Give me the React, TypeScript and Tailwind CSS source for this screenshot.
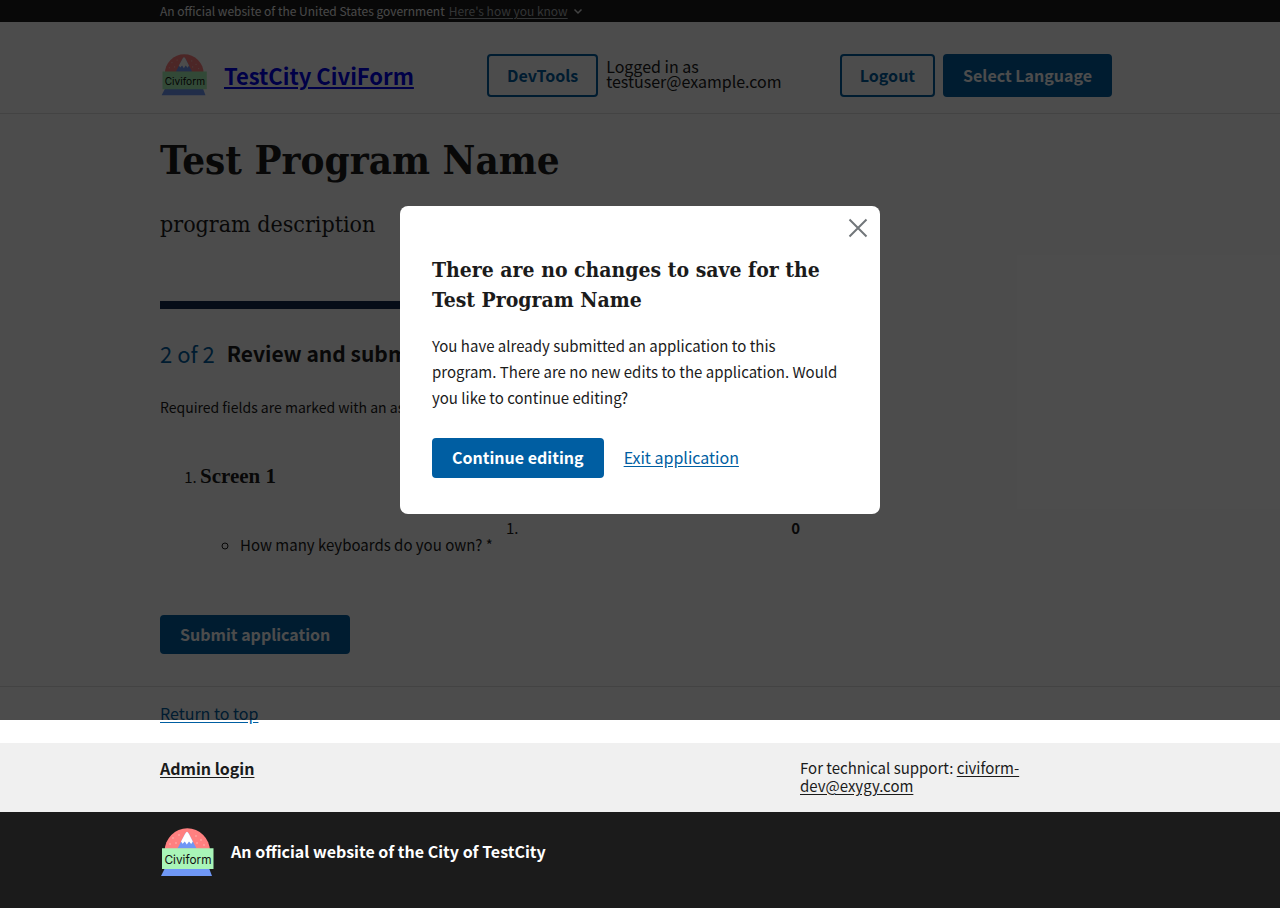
import type { ReactNode } from "react";

const sans = "font-['Noto_Sans_CJK_SC','Noto_Sans',sans-serif]";
const serif = "font-['DejaVu_Serif_Condensed','DejaVu_Serif',serif]";
const container = "mx-auto w-full max-w-5xl px-8";
const buttonBase =
  "flex shrink-0 items-center justify-center rounded border-2 border-[#005ea2] px-[18px] pb-0.5 text-[16px] font-bold leading-4 whitespace-nowrap";
const outline = "bg-transparent text-[#005ea2]";
const solid = "bg-[#005ea2] text-white";

function Logo({ className }: { className: string }) {
  return (
    <svg viewBox="0 0 54 50" className={className} role="img" aria-label="CiviForm logo">
      <path d="M4.7 23a22.6 22.8 0 0 1 45.2 0Z" fill="#ff8080" />
      <path d="M27 4 Q28 4 29 6L36.5 20.5h-19L25 6Q26 4 27 4Z" fill="#6f97f5" />
      <path d="M27 3.8Q26 4 25 6l-4 7.5 1.6 2.2 2.2-2.2 2 3 2.2-3 2.2 2.4 1.6-2.4L29 6Q28 4 27 3.8Z" fill="#fff" />
      <g fill="#ffc4c0">
        <circle cx="13" cy="10" r=".7" />
        <circle cx="19" cy="7" r=".7" />
        <circle cx="10" cy="16" r=".7" />
        <circle cx="16" cy="15" r=".7" />
        <circle cx="36" cy="8" r=".7" />
        <circle cx="41" cy="12" r=".7" />
        <circle cx="37" cy="15" r=".7" />
        <circle cx="44" cy="17" r=".7" />
      </g>
      <path d="M5 40h44l3 8H1Z" fill="#6f97f5" />
      <path d="M2 20.3h51.5v20.7H2Z" fill="#a9f5b8" />
      <text x="28" y="35.5" textAnchor="middle" fontSize="11.8" fill="#111" className="font-[Inter,sans-serif]">
        Civiform
      </text>
    </svg>
  );
}

function Banner() {
  return (
    <div className="bg-[#1b1b1b] text-[12px] leading-[22px] text-[#f0f0f0]">
      <div className={`${container} flex items-center gap-1`}>
        <span>An official website of the United States government</span>
        <button type="button" className="flex items-center gap-1 text-[#a9aeb1]">
          <span className="underline underline-offset-2">Here's how you know</span>
          <svg viewBox="0 0 12 12" className="size-3" fill="none" stroke="#dfe1e2" strokeWidth="1.5">
            <path d="m2.5 4.5 3.5 3.5 3.5-3.5" />
          </svg>
        </button>
      </div>
    </div>
  );
}

function Header() {
  return (
    <header className="border-b border-[#dfe1e2]">
      <div className={`${container} flex items-center pt-8 pb-4`}>
        <Logo className="h-[43px] w-12 shrink-0" />
        <a href="#" className="ml-4 pb-0.5 text-[22px] leading-8 font-bold text-[#0000ee] underline underline-offset-2">
          TestCity CiviForm
        </a>
        <div className="ml-auto flex w-[633px] items-center gap-2 pr-2">
          <button type="button" className={`${buttonBase} ${outline} h-[43px]`}>
            DevTools
          </button>
          <p className="mr-auto w-44 pb-1 text-[16px] leading-[15px]">
            Logged in as
            <br />
            testuser@example.com
          </p>
          <button type="button" className={`${buttonBase} ${outline} h-[43px]`}>
            Logout
          </button>
          <button type="button" className={`${buttonBase} ${solid} h-[43px]`}>
            Select Language
          </button>
        </div>
      </div>
    </header>
  );
}

function Section({ title, children }: { title: string; children: ReactNode }) {
  return (
    <li>
      <h3 className="inline font-['Liberation_Serif',serif] text-[21px] font-bold">{title}</h3>
      {children}
    </li>
  );
}

function Main() {
  return (
    <main id="main" className={`${container} pb-8`}>
      <h1 className={`${serif} pt-6 text-[40px] leading-[44px] font-bold`}>Test Program Name</h1>
      <p className={`${serif} pt-[26px] text-[23px] leading-8`}>program description</p>
      <div className="mt-[61px] h-2 w-80 bg-[#162e51]" />
      <h2 className="mt-[27px] flex items-center gap-3 leading-[34px]">
        <span className="text-[22px] font-normal text-[#005ea2]">2 of 2</span>
        <span className="text-[21px] font-bold">Review and submit</span>
      </h2>
      <p className="mt-[25px] text-[14px] leading-6">Required fields are marked with an asterisk (*).</p>
      <ol className="mt-[41px] list-decimal pl-10 text-[15px] leading-8">
        <Section title="Screen 1">
          <div className="mt-[21px] flex">
            <ul className="w-[306px] shrink-0 list-[circle] pt-[17px] pl-10 leading-7">
              <li className="whitespace-nowrap">How many keyboards do you own? *</li>
            </ul>
            <div className="flex w-[294px] justify-between leading-7">
              <span>1.</span>
              <span className="font-bold">0</span>
            </div>
          </div>
        </Section>
      </ol>
      <button type="button" className={`${buttonBase} ${solid} mt-14 h-[39px]`}>
        Submit application
      </button>
    </main>
  );
}

function Footer() {
  return (
    <footer>
      <div className="border-t border-[#dfe1e2]">
        <div className={`${container} pt-[14px] pb-[18px] text-[16px] leading-6`}>
          <a href="#main" className="text-[#005ea2] underline underline-offset-2">
            Return to top
          </a>
        </div>
      </div>
      <div className="bg-[#f0f0f0]">
        <div className={`${container} grid grid-cols-3 pt-4 pb-[17px] leading-[18px]`}>
          <a href="#" className="col-span-2 text-[16px] font-bold underline underline-offset-2">
            Admin login
          </a>
          <p className="w-60 text-[15px]">
            For technical support:{" "}
            <a href="mailto:civiform-dev@exygy.com" className="underline underline-offset-2">
              civiform-dev@exygy.com
            </a>
          </p>
        </div>
      </div>
      <div className="bg-[#1b1b1b]">
        <div className={`${container} flex items-center gap-[17px] pt-4 pb-[30px]`}>
          <Logo className="w-[54px]" />
          <p className="pb-1 text-[16px] leading-6 font-bold text-white">An official website of the City of TestCity</p>
        </div>
      </div>
    </footer>
  );
}

function Modal() {
  return (
    <div className="absolute inset-x-0 top-0 flex h-[720px] items-center justify-center bg-black/70">
      <section
        role="dialog"
        aria-modal="true"
        aria-labelledby="modal-title"
        className="flex w-[480px] flex-col rounded-lg bg-white"
      >
        <button type="button" aria-label="Close this window" className="mt-3 mr-3 self-end">
          <svg viewBox="0 0 20 20" className="size-5" fill="none" stroke="#71767a" strokeWidth="2">
            <path d="m1.5 1.5 17 17m0-17-17 17" />
          </svg>
        </button>
        <div className="px-8 pt-[17px] pb-9">
          <h2 id="modal-title" className={`${serif} text-[21px] leading-[30px] font-bold`}>
            There are no changes to save for the Test Program Name
          </h2>
          <p className="mt-[18px] pr-2 text-[15px] leading-[26px]">
            You have already submitted an application to this program. There are no new edits to the application. Would
            you like to continue editing?
          </p>
          <div className="mt-[27px] flex items-center gap-5">
            <button type="button" className={`${buttonBase} ${solid} h-10`}>
              Continue editing
            </button>
            <a href="#" className="pb-0.5 text-[16px] leading-6 text-[#005ea2] underline underline-offset-2">
              Exit application
            </a>
          </div>
        </div>
      </section>
    </div>
  );
}

export default function App() {
  return (
    <div className={`${sans} relative min-h-screen bg-white text-[#1b1b1b]`}>
      <Banner />
      <Header />
      <Main />
      <Footer />
      <Modal />
    </div>
  );
}
